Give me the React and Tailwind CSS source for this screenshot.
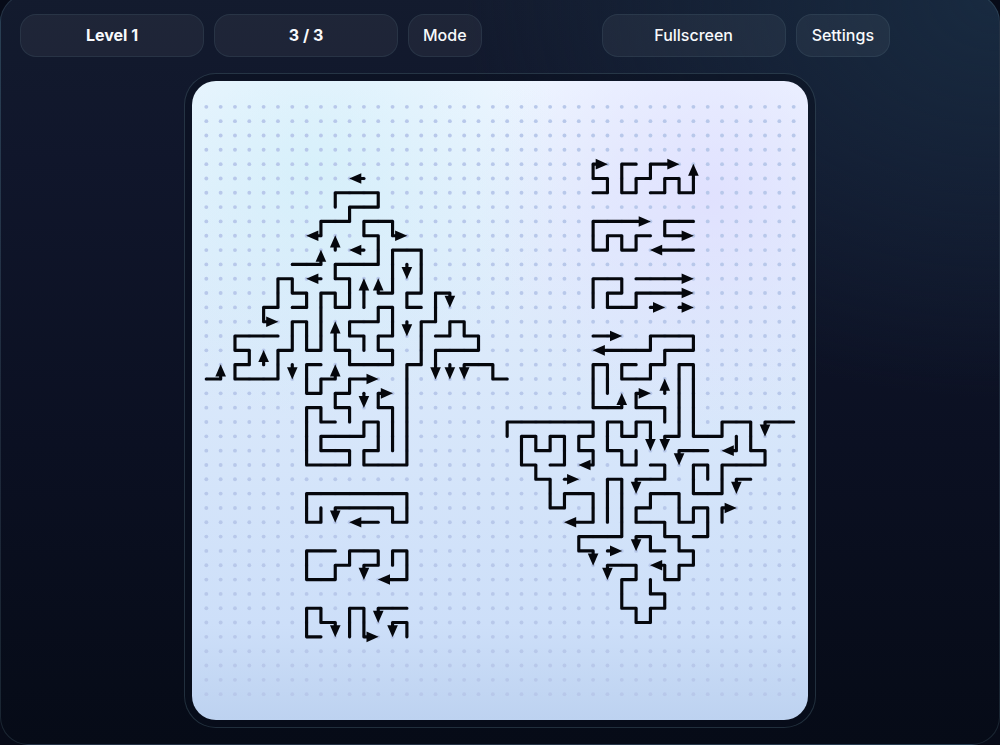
import React from "react";

// Each trail runs from its tail to its arrowhead, as "column,row" grid points.
const TRAILS = [
  "11,5 10,5",
  "9,7 9,6 12,6 12,7 10,7 10,8 8,8 8,9 7,9",
  "9,10 9,9",
  "11,10 10,10",
  "5,16 2,16 2,17 3,17 3,18 2,18 2,19 5,19 5,17 6,17 6,15 7,15 7,17 8,17 8,13 9,13 9,14 10,14 10,12 9,12 9,11 12,11 12,9 11,9 11,8 13,8 13,9 14,9",
  "6,11 8,11 8,10",
  "8,12 7,12",
  "6,14 7,14 7,13 6,13 6,12 5,12 5,14 4,14 4,15 5,15",
  "0,19 1,19 1,18",
  "4,18 4,17",
  "6,18 6,19",
  "11,14 11,12",
  "15,14 14,14 14,13 15,13 15,10 13,10 13,13 12,13 12,12",
  "14,11 14,12",
  "14,15 14,16",
  "9,22 8,22 8,21 7,21 7,25 10,25 10,24 8,24 8,23 11,23 11,22 12,22 12,24 11,24 11,25 14,25 14,18 15,18 15,15 16,15 16,13 17,13 17,14",
  "11,17 11,16 10,16 10,15 12,15 12,14 13,14 13,16 12,16 12,17 13,17 13,18 10,18 10,17 9,17 9,15",
  "16,16 17,16 17,15 18,15 18,16 19,16 19,17 16,17 16,19",
  "17,18 17,19",
  "21,19 20,19 20,18 18,18 18,19",
  "8,18 7,18 7,20 8,20 8,19 9,19 9,18",
  "10,22 10,21 9,21 9,20 10,20 10,19 12,19",
  "11,20 11,21",
  "13,24 13,21 12,21 12,20 13,20",
  "8,28 8,29 7,29 7,27 14,27 14,29 13,29 13,28 9,28 9,29",
  "12,29 10,29",
  "9,31 7,31 7,33 9,33 9,32 10,32 10,31 12,31 12,32 11,32 11,33",
  "13,32 13,31 14,31 14,33 12,33",
  "8,37 7,37 7,35 8,35 8,36 9,36 9,37",
  "10,37 10,35 11,35 11,37 12,37",
  "14,35 12,35 12,36",
  "14,37 14,36 13,36 13,37",
  "27,6 28,6 28,5 27,5 27,4 28,4",
  "30,4 29,4 29,6 30,6 30,5 31,5 31,4 33,4",
  "31,6 32,6 32,5 33,5 33,6 34,6 34,4",
  "31,9 30,9 30,10 29,10 29,9 28,9 28,10 27,10 27,8 31,8",
  "34,8 32,8 32,9 34,9",
  "34,10 31,10",
  "27,14 27,12 29,12 29,13 28,13 28,14 30,14 30,13 34,13",
  "30,12 34,12",
  "31,14 32,14",
  "33,14 34,14",
  "27,16 29,16",
  "30,18 29,18 29,19 31,19 31,18 32,18 32,17 34,17 34,16 31,16 31,17 27,17",
  "28,20 28,18 27,18 27,21 29,21 29,20",
  "32,22 32,21 30,21 30,20 31,20",
  "32,20 32,19",
  "35,26 35,25 34,25 34,27 36,27 36,25 39,25 39,24 38,24 38,22 36,22 36,23 34,23 34,18 33,18 33,23 32,23 32,24",
  "35,24 33,24 33,25",
  "37,23 37,24 36,24",
  "41,22 39,22 39,23",
  "38,26 37,26 37,27",
  "36,29 36,28 37,28",
  "21,23 21,22 27,22 27,23 26,23 26,24 27,24 27,25 26,25",
  "24,25 25,25 25,23 24,23 24,24 23,24 23,23 22,23 22,25 23,25 23,26 24,26 24,28 25,28 25,27 27,27 27,29 25,29",
  "25,26 26,26",
  "30,24 30,25 29,25 29,24 28,24 28,22 29,22 29,23 30,23 30,22 31,22 31,24",
  "31,25 32,25 32,26 30,26 30,27",
  "28,29 28,26 29,26 29,30 26,30 26,31 27,31 27,32",
  "28,31 29,31",
  "32,31 31,31 31,30 30,30 30,31",
  "31,33 31,34 32,34 32,35 31,35 31,36 30,36 30,35 29,35 29,33 30,33 30,32 28,32 28,33",
  "34,30 35,30 35,28 34,28 34,29 33,29 33,27 31,27 31,28 30,28 30,29 32,29 32,30 33,30 33,31 34,31 34,32 33,32 33,33 32,33 32,32 31,32",
];

const GRID = 42;
const HEAD = 0.82;

function Trail({ route }) {
  const pts = route.split(" ").map((p) => p.split(",").map(Number));
  const [x, y] = pts[pts.length - 1];
  const [px, py] = pts[pts.length - 2];
  const dx = Math.sign(x - px);
  const dy = Math.sign(y - py);
  const angle = (Math.atan2(dy, dx) * 180) / Math.PI;
  const shaft = [...pts.slice(0, -1), [x - dx * 0.6, y - dy * 0.6]];
  return (
    <g>
      <polyline
        points={shaft.map((p) => p.join(",")).join(" ")}
        fill="none"
        stroke="#05070c"
        strokeWidth="0.22"
        strokeLinecap="round"
        strokeLinejoin="round"
      />
      <polygon
        points={`0.03,0 ${-HEAD},-0.37 ${-HEAD},0.37`}
        fill="#05070c"
        transform={`translate(${x} ${y}) rotate(${angle})`}
      />
    </g>
  );
}

function Board() {
  const dots = [];
  for (let r = 0; r < GRID; r++) {
    for (let c = 0; c < GRID; c++) {
      dots.push(<circle key={`${c}-${r}`} cx={c} cy={r} r="0.135" />);
    }
  }
  return (
    <svg
      viewBox="-1 -1 43 43"
      className="block h-full w-full"
      role="img"
      aria-label="Arrow puzzle board"
    >
      <g fill="#b8c8ea">{dots}</g>
      {TRAILS.map((t) => (
        <Trail key={t} route={t} />
      ))}
    </svg>
  );
}

const pill =
  "flex h-[43px] items-center justify-center rounded-2xl border border-[#8cbec8]/10 bg-white/5 pb-px text-base text-slate-50";

export default function App() {
  return (
    <div className="flex h-screen min-h-[480px] flex-col overflow-hidden bg-[#070b18] font-['Inter',sans-serif]">
      <main className="-mt-1.5 flex min-h-0 flex-1 flex-col rounded-[28px] border border-[#8cbec8]/15 bg-[radial-gradient(ellipse_at_100%_0%,#182a40_0%,transparent_38%),linear-gradient(180deg,#131b2e_0%,#10162b_22%,#0b1022_60%,#060b17_100%)] pt-[19px] pb-4">
        <header className="flex justify-between pr-[109px] pl-[19px]">
          <div className="flex gap-[10px]">
            <div className={`${pill} w-[184px] font-bold`}>Level 1</div>
            <div className={`${pill} w-[184px] font-bold`}>3 / 3</div>
            <button type="button" className={`${pill} px-[14px] font-medium`}>
              Mode
            </button>
          </div>
          <div className="flex gap-[10px]">
            <button type="button" className={`${pill} w-[184px] font-medium`}>
              Fullscreen
            </button>
            <button type="button" className={`${pill} px-[15px] font-medium`}>
              Settings
            </button>
          </div>
        </header>
        <section className="mx-auto mt-4 min-h-0 w-full max-w-[632px] flex-1 rounded-[32px] border border-[#8cbec8]/20 bg-[#080d1c]/50 p-[7px]">
          <div className="h-full overflow-hidden rounded-3xl bg-[radial-gradient(circle_at_20%_14%,rgba(200,238,248,0.55)_0%,rgba(200,238,248,0)_34%),radial-gradient(circle_at_84%_18%,rgba(222,220,255,0.75)_0%,rgba(222,220,255,0)_32%),linear-gradient(180deg,#eff6ff_0%,#dceafb_40%,#cddff9_85%,#bdd2f0_100%)]">
            <Board />
          </div>
        </section>
      </main>
    </div>
  );
}
